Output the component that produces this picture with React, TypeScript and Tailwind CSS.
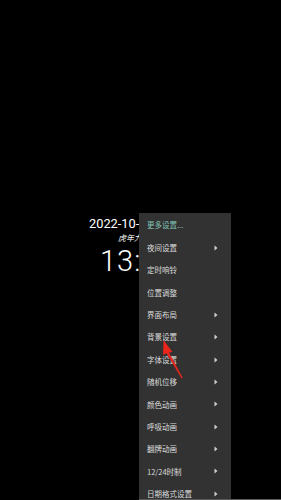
const items: { label: string; sub: boolean; accent?: boolean }[] = [
  { label: '更多设置...', sub: false, accent: true },
  { label: '夜间设置', sub: true },
  { label: '定时响铃', sub: false },
  { label: '位置调整', sub: false },
  { label: '界面布局', sub: true },
  { label: '背景设置', sub: true },
  { label: '字体设置', sub: true },
  { label: '随机位移', sub: true },
  { label: '颜色动画', sub: true },
  { label: '呼吸动画', sub: true },
  { label: '翻牌动画', sub: true },
  { label: '12/24时制', sub: true },
  { label: '日期格式设置', sub: true },
];

const cjk = { fontFamily: '"Noto Sans CJK SC", "Noto Sans", sans-serif' };

function Clock() {
  return (
    <div className="flex flex-col pt-[215px] text-white" style={{ fontFamily: 'Roboto, "Noto Sans CJK SC", sans-serif' }}>
      <div className="pl-[89px] text-[12.8px] leading-[18px]">2022-10-08 星期六</div>
      <div className="pl-[118px] text-[8px] leading-[10px] italic" style={cjk}>
        虎年九月十三
      </div>
      <div className="pl-[100px] pt-[1px] text-[29px] leading-[34px] font-light tracking-[1px]">13:45</div>
    </div>
  );
}

function Menu() {
  return (
    <div className="absolute left-[139px] top-[213px] bottom-0 w-[92px] bg-[#323232] pt-px shadow-lg">
      {items.map((it) => (
        <div key={it.label} className="flex h-[22.4px] items-center justify-between pl-2 pr-[13px]">
          <span
            className={`text-[7.5px] leading-none ${it.accent ? 'text-[#82c4b4]' : 'text-[#dcdcdc]'}`}
            style={cjk}
          >
            {it.label}
          </span>
          {it.sub && (
            <svg width="4" height="6" viewBox="0 0 4 6">
              <path d="M0.5 0.5 L3.5 3 L0.5 5.5 Z" fill="#d0d0d0" />
            </svg>
          )}
        </div>
      ))}
    </div>
  );
}

export default function App() {
  return (
    <div className="relative h-[500px] w-[281px] overflow-hidden bg-black">
      <Clock />
      <Menu />
      {/* red pointer */}
      <svg className="absolute left-0 top-0" width="281" height="500" viewBox="0 0 281 500">
        <path d="M163.5 340 L172.5 352 L169 352.6 L182.8 378 L181.6 378.5 L166.6 353.4 L163 354.8 Z" fill="#e8261c" />
      </svg>
      <div className="absolute bottom-0 left-[139px] right-0 h-px bg-[#5a5a5a]" />
    </div>
  );
}
